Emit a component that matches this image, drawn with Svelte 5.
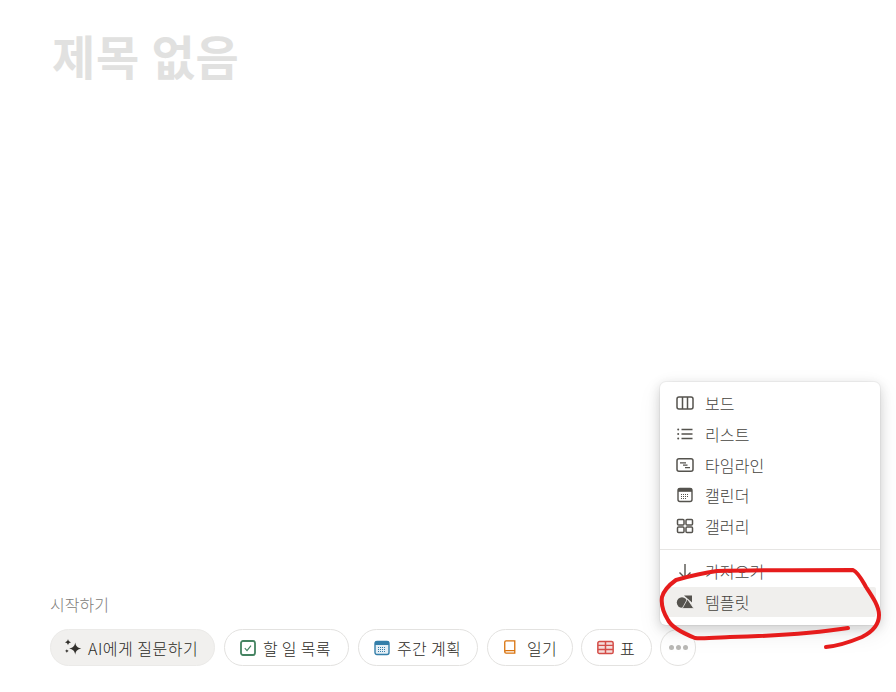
<script>
  const menuTop = [
    { id: 'board', label: '보드' },
    { id: 'list', label: '리스트' },
    { id: 'timeline', label: '타임라인' },
    { id: 'calendar', label: '캘린더' },
    { id: 'gallery', label: '갤러리' }
  ];
</script>

<div class="page">
  <h1 class="title">제목 없음</h1>

  <section class="start">
    <div class="start-label">시작하기</div>
    <div class="pills">
      <button class="pill ai">
        <svg width="20" height="20" viewBox="0 0 18 18"><path fill="#32302c" d="M11 4c.6 3.400 1.800 4.600 5.500 5.500-3.700.9-4.900 2.100-5.500 5.500-.6-3.400-1.800-4.600-5.500-5.500C9.200 8.600 10.400 7.400 11 4z"/><path fill="#32302c" d="M4.500 1c.3 1.700 1 2.400 2.800 2.800-1.800.4-2.500 1.100-2.800 2.800-.3-1.700-1-2.400-2.800-2.800C3.500 3.400 4.200 2.700 4.500 1z"/><path fill="#32302c" d="M3.500 10c.2 1 .6 1.400 1.700 1.700-1.100.3-1.500.7-1.700 1.700-.2-1-.6-1.400-1.700-1.700 1.100-.3 1.500-.7 1.700-1.700z"/></svg>
        <span class="ai-text">AI에게 질문하기</span>
      </button>
      <button class="pill todo">
        <svg width="16" height="16" viewBox="0 0 16 16"><rect x="1" y="1" width="14" height="14" rx="2" fill="none" stroke="#448361" stroke-width="1.800"/><path d="M4.800 8.200l2.200 2.400 4-5" fill="none" stroke="#448361" stroke-width="1.200"/></svg>
        <span class="wide">할 일 목록</span>
      </button>
      <button class="pill week">
        <svg width="16" height="16" viewBox="0 0 16 16"><rect x="1" y="1.500" width="14" height="13" rx="2" fill="#e4eef5" stroke="#337ea9" stroke-width="1.400"/><rect x="1" y="1.500" width="14" height="3.500" fill="#337ea9"/><path d="M4 7.500h8M4 9.500h8M4 11.500h8" stroke="#337ea9" stroke-width="1" stroke-dasharray="1 1"/></svg>
        <span class="wide">주간 계획</span>
      </button>
      <button class="pill diary">
        <svg width="16" height="17" viewBox="0 0 16 17" fill="none" stroke="#d9730d" stroke-width="1.500"><path d="M2 14V2.500A1.500 1.500 0 0 1 3.500 1H13.500V12H3.500A1.500 1.500 0 0 0 2 13.500 1.500 1.500 0 0 0 3.500 15h10v-3"/></svg>
        <span class="wide">일기</span>
      </button>
      <button class="pill table">
        <svg width="17" height="17" viewBox="0 0 16 16" fill="none" stroke="#d44c47" stroke-width="1.400"><rect x="0.800" y="2.300" width="14.400" height="11.400" rx="1.500" fill="#f4dcda"/><path d="M1 6h14M1 9.800h14M8 2.500v11"/></svg>
        <span>표</span>
      </button>
      <button class="pill more" aria-label="더 보기">
        <span class="dot"></span><span class="dot"></span><span class="dot"></span>
      </button>
    </div>
  </section>

  <div class="menu">
    <ul class="group first">
      {#each menuTop as item}
        <li class="row">
          <span class="ico">
            {#if item.id === 'board'}
              <svg width="18" height="18" viewBox="0 0 18 18" fill="none" stroke="#55534e" stroke-width="1.500"><rect x="1" y="3" width="16" height="12" rx="2"/><path d="M6.500 3v12M11.500 3v12"/></svg>
            {:else if item.id === 'list'}
              <svg width="18" height="18" viewBox="0 0 18 18" fill="none" stroke="#55534e" stroke-width="1.400"><path d="M5.500 4.500h11M5.500 9h11M5.500 13.500h11"/><circle cx="2.200" cy="4.500" r="1" fill="#55534e" stroke="none"/><circle cx="2.200" cy="9" r="1" fill="#55534e" stroke="none"/><circle cx="2.200" cy="13.500" r="1" fill="#55534e" stroke="none"/></svg>
            {:else if item.id === 'timeline'}
              <svg width="18" height="18" viewBox="0 0 18 18" fill="none" stroke="#55534e" stroke-width="1.500"><rect x="1" y="2.800" width="16" height="12.400" rx="2"/><path d="M4 6.800h6M7 9.200h4.500M9 11.600h5" stroke-width="1.200"/></svg>
            {:else if item.id === 'calendar'}
              <svg width="18" height="18" viewBox="0 0 18 18"><rect x="2" y="2.500" width="14" height="13" rx="2" fill="none" stroke="#55534e" stroke-width="1.400"/><rect x="2" y="2.500" width="14" height="3.300" fill="#55534e"/><path d="M5 8.500h8M5 10.500h8M5 12.500h6" stroke="#55534e" stroke-width="1" stroke-dasharray="1 1"/></svg>
            {:else}
              <svg width="18" height="18" viewBox="0 0 18 18" fill="none" stroke="#55534e" stroke-width="1.500"><rect x="1.500" y="2.500" width="6.500" height="5.500" rx="1"/><rect x="10" y="2.500" width="6.500" height="5.500" rx="1"/><rect x="1.500" y="10" width="6.500" height="5.500" rx="1"/><rect x="10" y="10" width="6.500" height="5.500" rx="1"/></svg>
            {/if}
          </span>
          <span>{item.label}</span>
        </li>
      {/each}
    </ul>
    <div class="divider"></div>
    <ul class="group">
      <li class="row">
        <span class="ico">
          <svg width="18" height="18" viewBox="0 0 18 18" fill="none" stroke="#55534e" stroke-width="1.400"><path d="M9 2v14M3.500 10.500L9 16l5.500-5.500"/></svg>
        </span>
        <span>가져오기</span>
      </li>
      <li class="row active">
        <span class="ico">
          <svg width="18" height="18" viewBox="0 0 18 18" fill="#55534e"><circle cx="6" cy="9.500" r="5.200"/><path d="M8 2.500h8v7z"/><path d="M11.500 6L17.800 15.500H6.200z" stroke="#efeeec" stroke-width=".8"/></svg>
        </span>
        <span>템플릿</span>
      </li>
    </ul>
  </div>

  <svg class="scribble" width="896" height="692" viewBox="0 0 896 692" fill="none">
    <path d="M848 628C810 634 770 636 730 637C712 638 700 639 695 638C685 634 672 628 668 620C663 612 661 604 662 597C664 590 669 585 676 580C690 576 702 573 717 571C760 570 810 570 853 570C858 572 862 580 866 587C872 596 879 606 879 615C879 625 872 632 862 637C850 642 838 646 826 647" stroke="#e61c1c" stroke-width="4" stroke-linecap="round" stroke-linejoin="round"/>
  </svg>
</div>

<style>
  :global(body) {
    margin: 0;
    background: #fff;
  }
  .page {
    position: relative;
    box-sizing: border-box;
    height: 692px;
    overflow: hidden;
    display: flex;
    flex-direction: column;
    justify-content: space-between;
    padding: 0 0 26px 50px;
    font-family: "Noto Sans CJK KR", "Liberation Sans", sans-serif;
    font-weight: 300;
    color: #37352f;
  }
  .title {
    margin: 0;
    padding: 25px 0 0 2px;
    font-size: 47px;
    line-height: 60px;
    letter-spacing: 0.8px;
    font-weight: 700;
    color: #e1e1e0;
  }
  .start-label {
    font-size: 16px;
    line-height: 20px;
    color: #7d7c78;
    margin-bottom: 15px;
  }
  .pills {
    display: flex;
    gap: 9px;
  }
  .pill {
    box-sizing: border-box;
    height: 37px;
    display: flex;
    align-items: center;
    gap: 7px;
    padding: 0 15px;
    border: 1px solid #e3e2e0;
    border-radius: 19px;
    background: #fff;
    font: inherit;
    font-size: 16px;
    color: #2c2a25;
    white-space: nowrap;
  }
  .wide { letter-spacing: 0.3px; }
  .ai-text { letter-spacing: 0.5px; }
  .ai {
    width: 165px;
    padding-left: 12px;
    gap: 5px;
    background: #f1f0ee;
    border-color: #ebeae8;
  }
  .todo { width: 125px; }
  .week { width: 120px; }
  .diary { width: 86px; gap: 10px; }
  .table { width: 71px; gap: 6px; margin-left: -1px; }
  .more {
    width: 36px;
    padding: 0;
    justify-content: center;
    gap: 2px;
    margin-left: -1px;
  }
  .dot {
    width: 5px;
    height: 5px;
    border-radius: 50%;
    background: #b9b8b5;
  }
  .menu {
    position: absolute;
    left: 660px;
    top: 382px;
    width: 220px;
    height: 243px;
    box-sizing: border-box;
    background: #fff;
    border-radius: 6px;
    box-shadow: 0 0 0 1px rgba(15, 15, 15, 0.04), 0 3px 12px rgba(15, 15, 15, 0.16), 0 8px 24px rgba(15, 15, 15, 0.08);
    font-size: 16px;
    color: #45433e;
  }
  .group {
    list-style: none;
    margin: 0;
    padding: 6px 4px;
  }
  .first { padding-bottom: 7.500px; }
  .row {
    height: 30.700px;
    display: flex;
    align-items: center;
    gap: 11px;
    padding-left: 12px;
    letter-spacing: 0.1px;
  }
  .ico {
    width: 18px;
    height: 18px;
    display: flex;
  }
  .divider {
    height: 1px;
    background: #e6e5e3;
  }
  .active {
    background: #f0efed;
    border-radius: 2px;
  }
  .scribble {
    position: absolute;
    left: 0;
    top: 0;
    pointer-events: none;
  }
</style>
